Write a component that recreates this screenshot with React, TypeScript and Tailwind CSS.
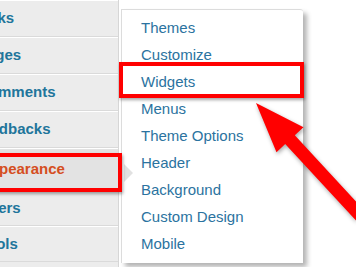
const SIDEBAR = [
  { label: "Links", row: "h-[37px]", shift: "-ml-[25px]", active: false },
  { label: "Pages", row: "h-[37px]", shift: "-ml-[23px]", active: false },
  { label: "Comments", row: "h-[37px]", shift: "-ml-[22px]", active: false },
  { label: "Feedbacks", row: "h-[37px]", shift: "-ml-[27px]", active: false },
  { label: "Appearance", row: "h-[42px]", shift: "-ml-[21px]", active: true },
  { label: "Users", row: "h-[36px]", shift: "-ml-[21px]", active: false },
  { label: "Tools", row: "h-[36px]", shift: "-ml-[21px]", active: false },
];

const SUBMENU = [
  "Themes",
  "Customize",
  "Widgets",
  "Menus",
  "Theme Options",
  "Header",
  "Background",
  "Custom Design",
  "Mobile",
];

function Sidebar() {
  return (
    <div className="w-[119px] shrink-0 bg-[#ececec] border-r border-[#d6d6d6] overflow-hidden">
      {SIDEBAR.map((item) => (
        <div
          key={item.label}
          className={`${item.row} flex items-center border-t border-t-white border-b border-b-[#dadada] ${
            item.active ? "bg-[#e3e3e3]" : ""
          }`}
        >
          <span
            className={`${item.shift} whitespace-nowrap text-[15px] font-bold ${
              item.active ? "text-[#d54e21]" : "text-[#21759b]"
            }`}
          >
            {item.label}
          </span>
        </div>
      ))}
    </div>
  );
}

function Submenu() {
  return (
    <div className="pt-[9px] pl-[2px]">
      <div className="w-[182px] h-[254px] bg-white border-l border-t border-[#dcdcdc] rounded-tr-[3px] shadow-[4px_4px_5px_rgba(0,0,0,0.3)] pt-[5px]">
        {SUBMENU.map((label) => (
          <div
            key={label}
            className="h-[27px] flex items-center pl-[19px] text-[15px] text-[#2b73a0] whitespace-nowrap"
          >
            {label}
          </div>
        ))}
      </div>
    </div>
  );
}

function Annotations() {
  return (
    <div className="absolute inset-0 pointer-events-none">
      <div className="absolute left-[124px] top-[164px] w-0 h-0 border-y-[9px] border-y-transparent border-l-[9px] border-l-[#e1e1e1]" />
      <div className="absolute left-[119px] top-[62px] w-[185px] h-[36px] border-[4px] border-[#ff0000] shadow-[1px_2px_3px_rgba(0,0,0,0.35)]" />
      <div className="absolute left-[-6px] top-[153px] w-[128px] h-[39px] border-[4px] border-[#ff0000] shadow-[1px_2px_3px_rgba(0,0,0,0.35)]" />
      <svg
        className="absolute left-0 top-0"
        width="356"
        height="267"
        viewBox="0 0 356 267"
        style={{ filter: "drop-shadow(1px 2px 2px rgba(0,0,0,0.35))" }}
      >
        <polygon
          fill="#ff0000"
          points="256,103 303.5,127.2 294.8,135.3 430.7,282.1 421.1,290.9 285.2,144.1 276.5,152.2"
        />
      </svg>
    </div>
  );
}

export default function App() {
  return (
    <div className="relative w-[356px] h-[267px] overflow-hidden bg-white font-['Liberation_Sans',Arial,sans-serif]">
      <div className="flex h-full">
        <Sidebar />
        <Submenu />
      </div>
      <Annotations />
    </div>
  );
}
